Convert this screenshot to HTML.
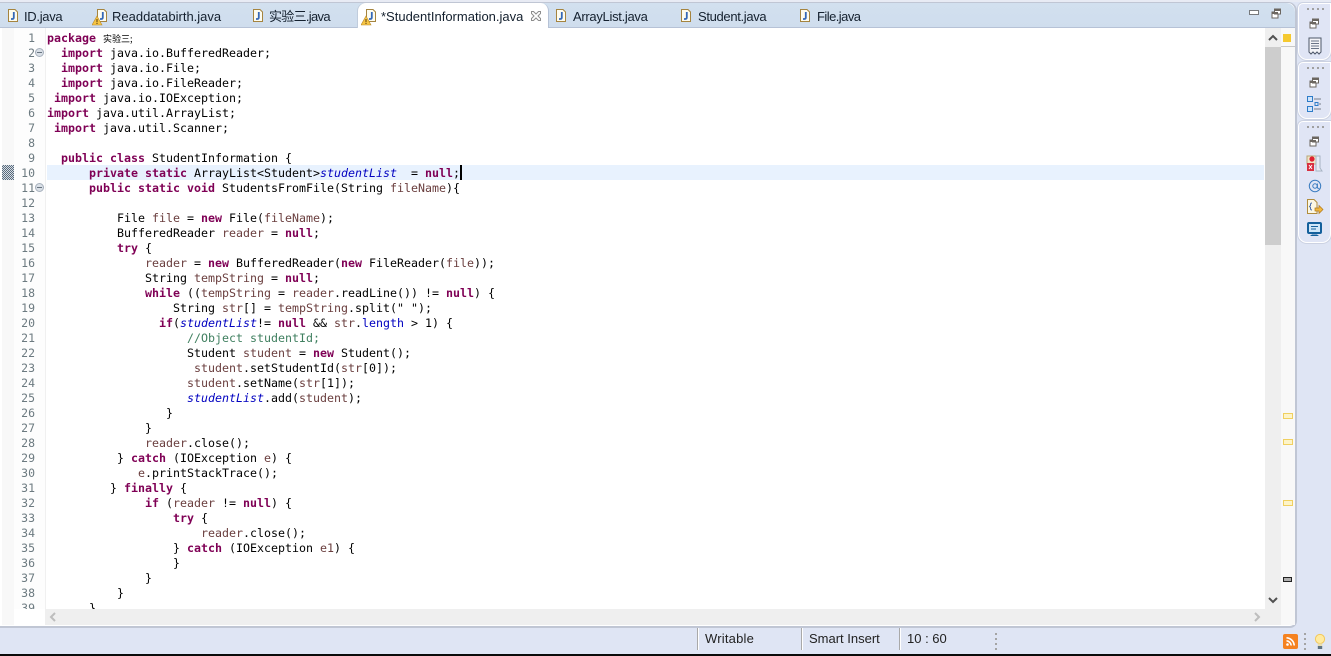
<!DOCTYPE html>
<html><head><meta charset="utf-8"><style>
html,body{margin:0;padding:0;width:1331px;height:656px;overflow:hidden;background:#dfe5f4;position:relative;font-family:"Liberation Sans","Noto Sans CJK SC",sans-serif}
.a{position:absolute}
#panel{left:0;top:2px;width:1295px;height:623px;background:#fff;border:solid #c0c6d4;border-width:1px 2px 2px 0;border-radius:0 9px 7px 0}
#tabbar{left:0;top:3px;width:1295px;height:24px;background:linear-gradient(#d2e0ef,#cfdded);border-bottom:1px solid #b6c2d6;border-radius:0 9px 0 0}
#act{left:358px;top:3px;width:190px;height:25px;background:#fff;border-right:1px solid #b6c2d6;border-radius:8px 8px 0 0;box-shadow:-1px 0 0 #c0ccdc}
.t{position:absolute;top:9px;font-size:13px;line-height:16px;color:#14202e;white-space:nowrap}
.ji{position:absolute;top:9px}
#code{left:47px;top:31px;width:1217px;height:578px;overflow:hidden}
.l{height:15px;line-height:15px;font:11.63px/15px "DejaVu Sans Mono","Liberation Mono","Noto Sans CJK SC",monospace;color:#000;white-space:pre}
.n{position:absolute;left:14px;width:21px;text-align:right;font:11.5px/15px "DejaVu Sans Mono",monospace;color:#6c7a80}
b{color:#7f0055;font-weight:bold}
i{color:#0000c0;font-style:italic}
u{text-decoration:none;color:#6a3e3e}
em{font-style:normal;color:#3f7f5f}
s{text-decoration:none;color:#0000c0}
.cjk{font:9px/15px "Noto Sans CJK SC",sans-serif}
.st{position:absolute;top:630px;font-size:13px;line-height:17px;color:#222}
.dv{position:absolute;top:628px;width:1px;height:22px;background:#a9a9a9;box-shadow:1px 0 0 #fff}
.trim{position:absolute;left:1298px;width:33px;background:#e0e5f5;border:1px solid #fff;box-shadow:0 0 0 1px #ccd2e2;border-radius:5px 0 9px 9px;box-sizing:border-box}
.dots{position:absolute;left:8px;top:4px;width:18px;height:2px;background:repeating-linear-gradient(90deg,#a0a0a0 0 2px,transparent 2px 5px)}
.fold{position:absolute;left:35px;width:9px;height:9px;border-radius:50%;background:#d9dfe6;border:1px solid #a6b0bc;box-sizing:border-box}
.fold:after{content:"";position:absolute;left:1px;right:1px;top:3px;height:1px;background:#66727e}
.mk{position:absolute;left:1283px;width:8px;height:4px;background:#fdf4c8;border:1px solid #f0d060}
</style></head><body>
<div class="a" style="left:0;top:0;width:1331px;height:2px;background:#e8ebf4"></div>
<div class="a" id="panel"></div>
<div class="a" id="tabbar"></div>
<div class="a" id="act"></div>

<svg width="0" height="0" style="position:absolute"><defs>
<g id="j"><path d="M1.5 .5H8L10.5 3V12.5H1.5Z" fill="#fdfcf0" stroke="#a5843f"/><path d="M6.8 3V8.5Q6.8 10 5.2 10H4" fill="none" stroke="#3468b8" stroke-width="1.8"/></g>
<g id="w"><path d="M5 0L10 9H0Z" fill="#f6c544" stroke="#b9892a" stroke-width=".6"/><path d="M5 3V6.2M5 7V8" stroke="#5a3a10"/></g>
<g id="rs"><rect x="1" y="4" width="6" height="6" fill="#fff" stroke="#6b6660"/><rect x="3.5" y="1" width="6" height="5" fill="#fff" stroke="#6b6660"/><rect x="3.5" y="1" width="6" height="2" fill="#6b6660"/><rect x="1" y="4" width="6" height="2" fill="#6b6660"/></g>
</defs></svg>

<svg class="ji" style="left:7px" width="13" height="14"><use href="#j"/></svg>
<div class="t" style="left:24px;letter-spacing:-.3px">ID.java</div>
<svg class="ji" style="left:92px" width="17" height="17"><use href="#j" x="4"/><use href="#w" y="7"/></svg>
<div class="t" style="left:112px">Readdatabirth.java</div>
<svg class="ji" style="left:252px" width="13" height="14"><use href="#j"/></svg>
<div class="t" style="left:269px;letter-spacing:-.7px">实验三.java</div>
<svg class="ji" style="left:361px" width="17" height="17"><use href="#j" x="4"/><use href="#w" y="7"/></svg>
<div class="t" style="left:381px">*StudentInformation.java</div>
<svg class="a" style="left:530px;top:10px" width="12" height="12" fill="none" stroke="#8d8d8d"><path d="M1.5 1.5L3.5 1.5 6 4 8.5 1.5H10.5V3.5L8 6 10.5 8.5V10.5H8.5L6 8 3.5 10.5H1.5V8.5L4 6 1.5 3.5Z"/></svg>
<svg class="ji" style="left:555px" width="13" height="14"><use href="#j"/></svg>
<div class="t" style="left:573px;letter-spacing:-.3px">ArrayList.java</div>
<svg class="ji" style="left:680px" width="13" height="14"><use href="#j"/></svg>
<div class="t" style="left:698px;letter-spacing:-.33px">Student.java</div>
<svg class="ji" style="left:799px" width="13" height="14"><use href="#j"/></svg>
<div class="t" style="left:817px;letter-spacing:-.55px">File.java</div>
<div class="a" style="left:1249px;top:10px;width:8px;height:3px;background:#fff;border:1px solid #77797c"></div>
<svg class="a" style="left:1271px;top:8px" width="11" height="11"><use href="#rs"/></svg>

<!-- rulers -->
<div class="a" style="left:2px;top:28px;width:12px;height:597px;background:#f8f8f8"></div>
<div class="a" style="left:14px;top:28px;width:31px;height:581px;background:#fdfdfd;border-right:1px solid #f0f0f0"></div>
<div class="a" style="left:2px;top:165px;width:12px;height:15px;background:repeating-conic-gradient(#5a6b7c 0 25%,#d5dce4 0 50%) 0 0/2px 2px"></div>
<div class="a" style="left:47px;top:165px;width:1217px;height:15px;background:#e8f2fe"></div>

<!-- line numbers -->
<div class="n" style="top:31px">1<br>2<br>3<br>4<br>5<br>6<br>7<br>8<br>9<br>10<br>11<br>12<br>13<br>14<br>15<br>16<br>17<br>18<br>19<br>20<br>21<br>22<br>23<br>24<br>25<br>26<br>27<br>28<br>29<br>30<br>31<br>32<br>33<br>34<br>35<br>36<br>37<br>38<br></div>
<div class="a" style="left:14px;top:601px;width:21px;height:8px;overflow:hidden;text-align:right;font:11.5px/15px 'DejaVu Sans Mono',monospace;color:#6c7a80">39</div>
<div class="fold" style="top:48px"></div>
<div class="fold" style="top:183px"></div>

<div class="a" id="code">
<div class="l"><b>package</b> <span class="cjk">实验三;</span></div>
<div class="l">  <b>import</b> java.io.BufferedReader;</div>
<div class="l">  <b>import</b> java.io.File;</div>
<div class="l">  <b>import</b> java.io.FileReader;</div>
<div class="l"> <b>import</b> java.io.IOException;</div>
<div class="l"><b>import</b> java.util.ArrayList;</div>
<div class="l"> <b>import</b> java.util.Scanner;</div>
<div class="l"> </div>
<div class="l">  <b>public</b> <b>class</b> StudentInformation {</div>
<div class="l">      <b>private</b> <b>static</b> ArrayList&lt;Student&gt;<i>studentList</i>  = <b>null</b>;</div>
<div class="l">      <b>public</b> <b>static</b> <b>void</b> StudentsFromFile(String <u>fileName</u>){</div>
<div class="l"> </div>
<div class="l">          File <u>file</u> = <b>new</b> File(<u>fileName</u>);</div>
<div class="l">          BufferedReader <u>reader</u> = <b>null</b>;</div>
<div class="l">          <b>try</b> {</div>
<div class="l">              <u>reader</u> = <b>new</b> BufferedReader(<b>new</b> FileReader(<u>file</u>));</div>
<div class="l">              String <u>tempString</u> = <b>null</b>;</div>
<div class="l">              <b>while</b> ((<u>tempString</u> = <u>reader</u>.readLine()) != <b>null</b>) {</div>
<div class="l">                  String <u>str</u>[] = <u>tempString</u>.split(" ");</div>
<div class="l">                <b>if</b>(<i>studentList</i>!= <b>null</b> &amp;&amp; <u>str</u>.<s>length</s> &gt; 1) {</div>
<div class="l">                    <em>//Object studentId;</em></div>
<div class="l">                    Student <u>student</u> = <b>new</b> Student();</div>
<div class="l">                     <u>student</u>.setStudentId(<u>str</u>[0]);</div>
<div class="l">                    <u>student</u>.setName(<u>str</u>[1]);</div>
<div class="l">                    <i>studentList</i>.add(<u>student</u>);</div>
<div class="l">                 }</div>
<div class="l">              }</div>
<div class="l">              <u>reader</u>.close();</div>
<div class="l">          } <b>catch</b> (IOException <u>e</u>) {</div>
<div class="l">             <u>e</u>.printStackTrace();</div>
<div class="l">         } <b>finally</b> {</div>
<div class="l">              <b>if</b> (<u>reader</u> != <b>null</b>) {</div>
<div class="l">                  <b>try</b> {</div>
<div class="l">                      <u>reader</u>.close();</div>
<div class="l">                  } <b>catch</b> (IOException <u>e1</u>) {</div>
<div class="l">                  }</div>
<div class="l">              }</div>
<div class="l">          }</div>
<div class="l">      }</div>
</div>
<div class="a" style="left:460px;top:165px;width:2px;height:15px;background:#000"></div>

<!-- scrollbars -->
<div class="a" style="left:1265px;top:28px;width:16px;height:581px;background:#efefef"></div>
<div class="a" style="left:1265px;top:47px;width:16px;height:198px;background:#cdcdcd"></div>
<svg class="a" style="left:1268px;top:34px" width="10" height="8" fill="none" stroke="#505050" stroke-width="2"><path d="M1 6L5 2 9 6"/></svg>
<svg class="a" style="left:1268px;top:596px" width="10" height="8" fill="none" stroke="#505050" stroke-width="2"><path d="M1 2L5 6 9 2"/></svg>
<div class="a" style="left:1281px;top:28px;width:14px;height:597px;background:#f8f8f8"></div>
<div class="a" style="left:1283px;top:34px;width:8px;height:8px;background:#f5c92f"></div>
<div class="a" style="left:1281px;top:46px;width:14px;height:1px;background:#c8c8c8"></div>
<div class="mk" style="top:413px"></div>
<div class="mk" style="top:439px"></div>
<div class="mk" style="top:500px"></div>
<div class="a" style="left:1283px;top:577px;width:7px;height:3px;background:#b0b0b0;border:1px solid #222"></div>
<div class="a" style="left:45px;top:609px;width:1236px;height:16px;background:#efefef"></div>
<svg class="a" style="left:49px;top:612px" width="9" height="10" fill="none" stroke="#bdbdbd" stroke-width="2"><path d="M6 1L2 5 6 9"/></svg>
<svg class="a" style="left:1252px;top:612px" width="9" height="10" fill="none" stroke="#bdbdbd" stroke-width="2"><path d="M3 1L7 5 3 9"/></svg>

<!-- trim panels -->
<div class="trim" style="top:3px;height:57px"><div class="dots"></div>
<svg class="a" style="left:10px;top:14px" width="11" height="11"><use href="#rs"/></svg>
<svg class="a" style="left:8px;top:33px" width="16" height="19"><path d="M2 1H14V15L12 17 10 15 8 17 6 15 4 17 2 15Z" fill="#f4f4f8" stroke="#4c5668"/><path d="M4 4H12M4 6.5H12M4 9H12M4 11.5H12" stroke="#6a7488"/></svg>
</div>
<div class="trim" style="top:62px;height:57px"><div class="dots"></div>
<svg class="a" style="left:10px;top:14px" width="11" height="11"><use href="#rs"/></svg>
<svg class="a" style="left:7px;top:33px" width="18" height="18" fill="none"><rect x="1.5" y=".5" width="5" height="5" fill="#cfe4fb" stroke="#2e7cc8"/><rect x="1.5" y="10.5" width="5" height="5" fill="#cfe4fb" stroke="#2e7cc8"/><rect x="9" y="6.5" width="3" height="3" stroke="#2e7cc8"/><path d="M8 3H15M13 8H15M8 13H15" stroke="#78808c"/></svg>
</div>
<div class="trim" style="top:121px;height:122px"><div class="dots"></div>
<svg class="a" style="left:10px;top:14px" width="11" height="11"><use href="#rs"/></svg>
<svg class="a" style="left:7px;top:33px" width="18" height="18"><rect x="1" y="1" width="9" height="8" fill="#f0e6c8" stroke="#b8a678"/><circle cx="6" cy="4" r="2.6" fill="#e02030"/><rect x="1" y="8" width="7" height="8" fill="#d83040"/><path d="M3 10L6 14M6 10L3 14" stroke="#fff"/><path d="M10 1H14V13L16 16H10Z" fill="#e6ecf4" stroke="#a8b4c4"/></svg>
<svg class="a" style="left:9px;top:57px" width="14" height="14" fill="none" stroke="#3a7cc0"><circle cx="7" cy="7" r="5.7"/><circle cx="7" cy="7" r="2.2"/><path d="M9.4 4.5V8.4Q9.6 9.8 11.2 9.2"/></svg>
<svg class="a" style="left:7px;top:77px" width="18" height="17"><path d="M1.5 .5H8L11 3.5V14.5H1.5Z" fill="#fbf7e4" stroke="#b08c3c"/><path d="M6 4Q4.5 4 4.5 5.5V6.5L3.5 7.5 4.5 8.5V9.5Q4.5 11 6 11" fill="none" stroke="#4a6ca8"/><path d="M9 9H13V6.5L17 10.5 13 14.5V12H9Z" fill="#f2b840" stroke="#b07818" stroke-width=".7"/></svg>
<svg class="a" style="left:8px;top:100px" width="16" height="15"><rect x="1" y="1" width="13" height="10" rx="1" fill="#cfe6f8" stroke="#14609c" stroke-width="2"/><path d="M4 4.5H11M4 7H9" stroke="#14609c"/><path d="M5 12.5H10L12 14H3Z" fill="#14609c"/></svg>
</div>

<!-- status -->
<div class="dv" style="left:697px"></div>
<div class="st" style="left:705px;letter-spacing:.2px">Writable</div>
<div class="dv" style="left:801px"></div>
<div class="st" style="left:809px">Smart Insert</div>
<div class="dv" style="left:899px"></div>
<div class="st" style="left:907px">10 : 60</div>
<div class="a" style="left:995px;top:633px;width:2px;height:17px;background:repeating-linear-gradient(#a4a4a4 0 2px,transparent 2px 5px)"></div>
<div class="a" style="left:1283px;top:634px;width:15px;height:15px;background:#f58220;border-radius:2px;overflow:hidden"><svg width="15" height="15" fill="none" stroke="#fff" stroke-width="1.6"><circle cx="4.5" cy="10.5" r="1.3" fill="#fff" stroke="none"/><path d="M3.5 6.8A5 5 0 0 1 8.2 11.5M3.5 3.8A8 8 0 0 1 11.2 11.5"/></svg></div>
<div class="a" style="left:1304px;top:633px;width:2px;height:17px;background:repeating-linear-gradient(#a4a4a4 0 2px,transparent 2px 5px)"></div>
<svg class="a" style="left:1314px;top:633px" width="12" height="17"><circle cx="6" cy="6" r="4.6" fill="#ffeaa0" stroke="#f3c85a"/><rect x="3.8" y="10.5" width="4.4" height="2.5" fill="#e8ddb0"/><rect x="3.8" y="13" width="4.4" height="3" fill="#5f7280"/></svg>
<div class="a" style="left:0;top:654px;width:1331px;height:2px;background:#0a0a0a"></div>
</body></html>
